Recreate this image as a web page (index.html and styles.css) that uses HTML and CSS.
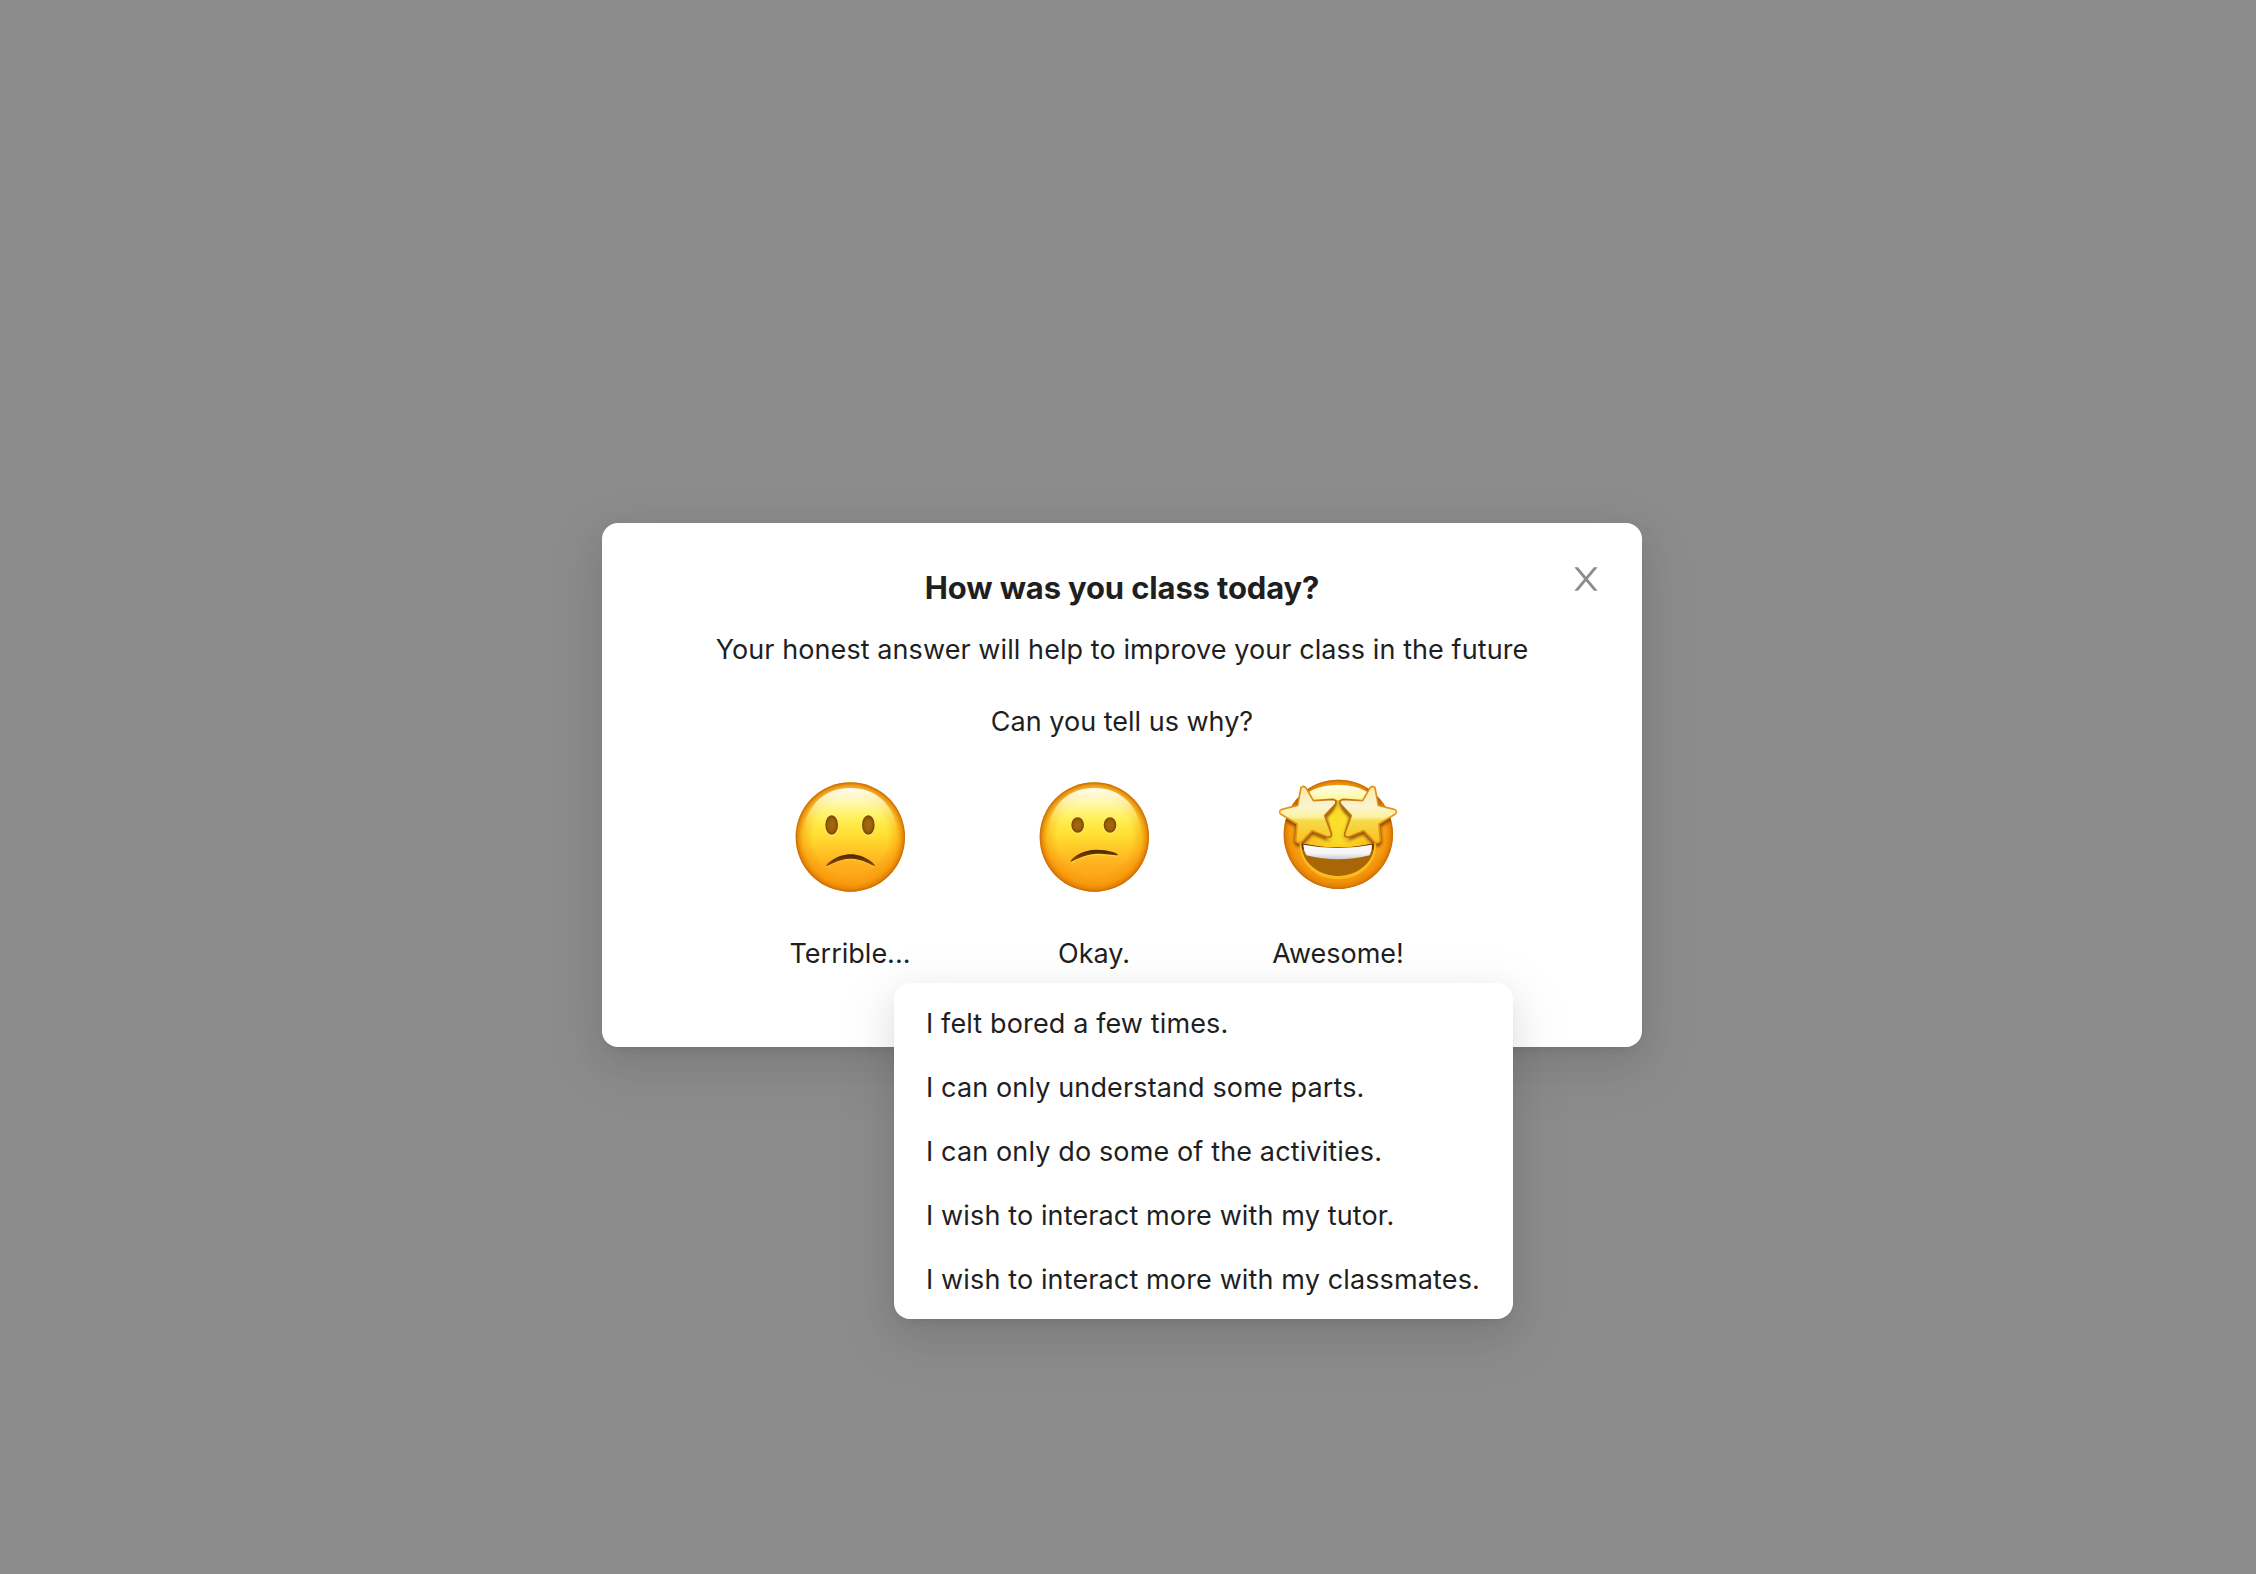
FILE: index.html
```html
<!DOCTYPE html>
<html lang="en">
<head>
<meta charset="utf-8">
<title>Class feedback</title>
<link rel="stylesheet" href="styles.css">
</head>
<body>
<svg class="defs" width="0" height="0" aria-hidden="true">
  <defs>
    <linearGradient id="skin" x1="0" y1="0" x2="0" y2="1">
      <stop offset="0" stop-color="#fff36a"/>
      <stop offset=".28" stop-color="#fff04a"/>
      <stop offset=".5" stop-color="#ffdc30"/>
      <stop offset=".75" stop-color="#ffb01e"/>
      <stop offset="1" stop-color="#f99c13"/>
    </linearGradient>
    <radialGradient id="rim" cx=".5" cy=".5" r=".5">
      <stop offset=".68" stop-color="#f08a00" stop-opacity="0"/>
      <stop offset=".86" stop-color="#f49200" stop-opacity=".42"/>
      <stop offset=".96" stop-color="#e27c02" stop-opacity=".85"/>
      <stop offset="1" stop-color="#c0680a"/>
    </radialGradient>
    <linearGradient id="gloss" x1="0" y1="0" x2="0" y2="1">
      <stop offset="0" stop-color="#fff" stop-opacity=".95"/>
      <stop offset=".25" stop-color="#fffbd0" stop-opacity=".75"/>
      <stop offset=".7" stop-color="#fff66a" stop-opacity=".12"/>
      <stop offset="1" stop-color="#fff04a" stop-opacity="0"/>
    </linearGradient>
    <radialGradient id="eye">
      <stop offset="0" stop-color="#a86a08"/>
      <stop offset=".6" stop-color="#99600c"/>
      <stop offset="1" stop-color="#774407"/>
    </radialGradient>
    <linearGradient id="lip" x1="0" y1="0" x2="0" y2="1">
      <stop offset="0" stop-color="#4f2600"/>
      <stop offset="1" stop-color="#8b4b04"/>
    </linearGradient>
    <radialGradient id="grin" cx=".5" cy=".4" r=".62">
      <stop offset="0" stop-color="#ffec35"/>
      <stop offset=".35" stop-color="#fbd022"/>
      <stop offset=".7" stop-color="#f7a71b"/>
      <stop offset="1" stop-color="#e58404"/>
    </radialGradient>
    <linearGradient id="cap" x1="0" y1="0" x2="0" y2="1">
      <stop offset="0" stop-color="#fffef0"/>
      <stop offset=".6" stop-color="#fffab8"/>
      <stop offset="1" stop-color="#fff27a"/>
    </linearGradient>
    <linearGradient id="star" x1="0" y1="0" x2="0" y2="1">
      <stop offset="0" stop-color="#ffe9a0"/>
      <stop offset=".35" stop-color="#f8f4d2"/>
      <stop offset=".54" stop-color="#fdf2a0"/>
      <stop offset=".6" stop-color="#f5dc4c"/>
      <stop offset="1" stop-color="#fdbd18"/>
    </linearGradient>
    <linearGradient id="star-edge" x1="0" y1="0" x2="1" y2="0">
      <stop offset="0" stop-color="#e8961c"/>
      <stop offset=".6" stop-color="#d98a18"/>
      <stop offset="1" stop-color="#b5690e"/>
    </linearGradient>
    <linearGradient id="teeth" x1="0" y1="0" x2="0" y2="1">
      <stop offset="0" stop-color="#fff"/>
      <stop offset=".6" stop-color="#f4f4f6"/>
      <stop offset="1" stop-color="#c9c9d2"/>
    </linearGradient>
    <filter id="soft" x="-20%" y="-20%" width="140%" height="140%"><feGaussianBlur stdDeviation="5"/></filter>
    <clipPath id="face-clip"><circle cx="211" cy="208" r="163"/></clipPath>
    <g id="head">
      <circle cx="211" cy="216" r="164" fill="url(#skin)"/>
      <circle cx="211" cy="216" r="164" fill="url(#rim)"/>
      <path d="M211 69C285 69 335 116 348 180C352 222 300 236 211 236S70 222 74 180C87 116 137 69 211 69Z" fill="url(#gloss)"/>
    </g>
  </defs>
</svg>

<main class="mask">
  <section class="modal" role="dialog" aria-labelledby="title">
    <button class="close" type="button" aria-label="Close">
      <svg viewBox="64 64 896 896" width="32" height="32" fill="currentColor"><path d="M563.8 512l262.5-312.9c4.4-5.2.7-13.1-6.1-13.1h-79.8c-4.7 0-9.2 2.1-12.3 5.7L511.6 449.8 295.1 191.7c-3-3.6-7.5-5.7-12.3-5.7H203c-6.8 0-10.5 7.9-6.1 13.1L459.4 512 196.9 824.9A7.95 7.95 0 00203 838h79.8c4.7 0 9.2-2.1 12.3-5.7l216.5-258.1 216.5 258.1c3 3.6 7.5 5.7 12.3 5.7h79.8c6.8 0 10.5-7.9 6.1-13.1L563.8 512z"/></svg>
    </button>
    <h1 class="title" id="title">How was you class today?</h1>
    <p class="subtitle">Your honest answer will help to improve your class in the future</p>
    <p class="question">Can you tell us why?</p>

    <div class="ratings">
      <div class="rating">
        <svg class="emoji" viewBox="0 0 420 420">
          <use href="#head"/>
          <ellipse cx="155" cy="182" rx="21" ry="31" fill="#ffef62"/>
          <ellipse cx="265" cy="182" rx="21" ry="31" fill="#ffef62"/>
          <ellipse cx="155" cy="180" rx="19" ry="29.5" fill="url(#eye)"/>
          <ellipse cx="265" cy="180" rx="19" ry="29.5" fill="url(#eye)"/>
          <path d="M140 305Q176 281 211 281T283 305" fill="none" stroke="#ffd545" stroke-width="4"/>
          <path d="M139 303C137 298 171 268 212 268S287 298 285 303C281 306 252 281 212 281S143 306 139 303Z" fill="url(#lip)"/>
        </svg>
        <span class="label">Terrible...</span>
      </div>
      <div class="rating">
        <svg class="emoji" viewBox="0 0 420 420">
          <use href="#head"/>
          <ellipse cx="161" cy="182" rx="21" ry="25" fill="#ffef62"/>
          <ellipse cx="258" cy="182" rx="21" ry="25" fill="#ffef62"/>
          <ellipse cx="161" cy="180" rx="19" ry="23.5" fill="url(#eye)"/>
          <ellipse cx="258" cy="180" rx="19" ry="23.5" fill="url(#eye)"/>
          <path d="M143 293Q181 268 216 268T280 273" fill="none" stroke="#ffd545" stroke-width="4"/>
          <path d="M139 290C144 276 177 254 218 254C252 254 283 264 282 270C280 273 250 266 218 266C176 267 145 292 139 290Z" fill="url(#lip)"/>
        </svg>
        <span class="label">Okay.</span>
      </div>
      <div class="rating">
        <svg class="emoji" viewBox="0 0 420 420">
          <circle cx="211" cy="208" r="164" fill="url(#grin)"/>
          <circle cx="211" cy="208" r="164" fill="url(#rim)"/>
          <g clip-path="url(#face-clip)">
            <path id="star-shadow" d="M99 74Q107 65 115 76L136 113L194 109Q209 111 202 124L170 158L190 211Q192 225 177 222L133 203L99 238Q87 244 83 232L87 183L39 154Q29 145 42 139L89 127Z" fill="#7a3600" stroke="#7a3600" stroke-width="10" opacity=".8" filter="url(#soft)"/>
            <use href="#star-shadow" transform="matrix(-1 0 0 1 420 0)"/>
          </g>
          <path d="M210 90Q222 160 246 228Q210 240 174 228Q198 160 210 90Z" fill="#f9dc2c" opacity=".8" filter="url(#soft)"/>
          <path d="M211 60C258 60 294 74 312 92L284 110Q210 100 136 110L108 92C126 74 164 60 211 60Z" fill="url(#cap)"/>
          <path d="M94 232Q210 264 325 232C327 300 273 343 210 343S94 300 94 232Z" fill="#ffc426" opacity=".75"/>
          <path d="M101 235Q210 260 318 235C322 293 267 333 210 333S98 293 101 235Z" fill="#a96606"/>
          <path d="M101 235Q210 260 318 235Q318 248 316 254L103 254Q100 246 101 235Z" fill="#6d3400"/>
          <path d="M106 239Q210 259 312 239Q313 257 305 271Q210 295 115 271Q106 257 106 239Z" fill="url(#teeth)"/>
          <g id="star-shape">
            <path d="M99 68Q107 59 115 70L136 107L194 103Q209 105 202 118L170 152L190 205Q192 219 177 216L133 197L99 232Q87 238 83 226L87 177L39 148Q29 139 42 133L89 121Z" fill="url(#star)" stroke="url(#star-edge)" stroke-width="5" stroke-linejoin="round"/>
          </g>
          <use href="#star-shape" transform="matrix(-1 0 0 1 420 0)"/>
        </svg>
        <span class="label">Awesome!</span>
      </div>
    </div>

    <ul class="menu">
      <li class="item">I felt bored a few times.</li>
      <li class="item">I can only understand some parts.</li>
      <li class="item">I can only do some of the activities.</li>
      <li class="item">I wish to interact more with my tutor.</li>
      <li class="item">I wish to interact more with my classmates.</li>
    </ul>
  </section>
</main>
</body>
</html>
```
FILE: styles.css
```css
* { box-sizing: border-box; }

body {
  margin: 0;
  background: #8c8c8c;
  color: #1f1f1f;
  font-family: Inter, "Liberation Sans", sans-serif;
  font-size: 27px;
  line-height: 44px;
}

.defs { position: absolute; }

.mask {
  display: flex;
  justify-content: center;
  align-items: flex-start;
  height: 1574px;
  padding: 523px 12px 0 0;
  overflow: hidden;
}

.modal,
.menu {
  background: #fff;
  border-radius: 16px;
  box-shadow:
    0 12px 32px 0 rgba(0, 0, 0, .08),
    0 6px 12px -8px rgba(0, 0, 0, .12),
    0 18px 56px 16px rgba(0, 0, 0, .05);
}

.modal {
  position: relative;
  width: 1040px;
  height: 524px;
  padding-top: 41px;
  text-align: center;
}

.close {
  position: absolute;
  top: 40px;
  right: 40px;
  width: 32px;
  height: 32px;
  padding: 0;
  border: 0;
  background: none;
  color: #8c8c8c;
}

.close svg { display: block; }

.title {
  margin: 0;
  font-size: 31px;
  font-weight: 700;
  line-height: 48px;
  letter-spacing: -.15px;
}

.subtitle {
  margin: 16px 0 0;
  letter-spacing: .08px;
}

.question { margin: 28px 0 0; }

.ratings {
  display: grid;
  grid-template-columns: repeat(3, 244px);
  padding: 21px 0 0 126px;
}

.rating {
  display: flex;
  flex-direction: column;
  align-items: center;
  gap: 27px;
}

.emoji {
  display: block;
  width: 140px;
  height: 140px;
}

.menu {
  position: absolute;
  top: 460px;
  left: 292px;
  width: 619px;
  height: 336px;
  margin: 0;
  padding: 9px 8px 7px;
  list-style: none;
  text-align: left;
  letter-spacing: .13px;
}

.item {
  padding: 10px 24px;
  line-height: 44px;
  white-space: nowrap;
}
```
